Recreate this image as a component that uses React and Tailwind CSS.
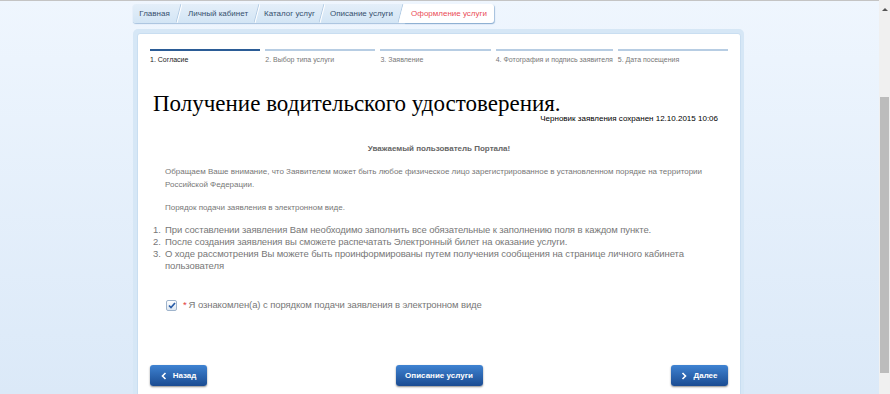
import React, { useState } from "react";

const tabs = [
  { label: "Главная", w: "w-[43px]" },
  { label: "Личный кабинет", w: "w-[72px]" },
  { label: "Каталог услуг", w: "w-[59px]" },
  { label: "Описание услуги", w: "w-[73px]" },
];

const steps = [
  "1. Согласие",
  "2. Выбор типа услуги",
  "3. Заявление",
  "4. Фотография и подпись заявителя",
  "5. Дата посещения",
];

const rules = [
  "При составлении заявления Вам необходимо заполнить все обязательные к заполнению поля в каждом пункте.",
  "После создания заявления вы сможете распечатать Электронный билет на оказание услуги.",
  "О ходе рассмотрения Вы можете быть проинформированы путем получения сообщения на странице личного кабинета пользователя",
];

const Chevron = ({ dir }) => (
  <svg width="6" height="8" viewBox="0 0 6 8" className="shrink-0">
    {dir === "left" ? (
      <polyline points="4.5,1 1.5,4 4.5,7" fill="none" stroke="white" strokeWidth="1.6" />
    ) : (
      <polyline points="1.5,1 4.5,4 1.5,7" fill="none" stroke="white" strokeWidth="1.6" />
    )}
  </svg>
);

// slanted divider between breadcrumb tabs
const Divider = ({ last }) => (
  <svg width="6" height="19" viewBox="0 0 6 19" className="shrink-0">
    {last && <polygon points="5,0 6,0 6,19 0.5,19" fill="white" />}
    <line x1="0" y1="19" x2="5" y2="0" stroke="#b4cce4" strokeWidth="1" />
    <line x1="1" y1="19" x2="6" y2="0" stroke="white" strokeWidth="1" />
  </svg>
);

const NavButton = ({ children, className = "" }) => (
  <button
    className={
      "h-[21px] flex items-center justify-center gap-[6px] rounded-[3px] bg-gradient-to-b from-[#3f83d2] to-[#1b4c92] text-white text-[8px] font-bold shadow-[0_1px_2px_rgba(0,0,0,0.45)] " +
      className
    }
  >
    {children}
  </button>
);

export default function App() {
  const [agreed, setAgreed] = useState(true);

  return (
    <div className="w-[890px] h-[394px] overflow-hidden flex font-['Liberation_Sans',Arial,sans-serif]">
      <div className="flex-1 flex flex-col bg-gradient-to-b from-[#eff6fe] to-[#dbe9f8]">
        {/* top strip */}
        <div className="h-[3px] bg-[#d9d9d9] border-b border-[#c4c4c4]" />

        <div className="w-[611px] ml-[133px] mt-[3px]">
          {/* Breadcrumb tabs */}
          <div className="flex h-[19px] w-[361px] rounded-[3px] bg-gradient-to-b from-[#e4eff9] to-[#d3e5f5] shadow-[0_1px_1px_rgba(120,160,200,0.6)] text-[8px] text-[#36506e]">
            {tabs.map((t, i) => (
              <React.Fragment key={t.label}>
                <div className={"flex items-center justify-center whitespace-nowrap " + t.w}>{t.label}</div>
                <Divider last={i === tabs.length - 1} />
              </React.Fragment>
            ))}
            <div className="flex-1 flex items-center justify-center whitespace-nowrap bg-white rounded-r-[3px] text-[#ea4b55] shadow-[1px_1px_1px_rgba(120,160,200,0.6)]">
              Оформление услуги
            </div>
          </div>

          {/* Main panel */}
          <div className="mt-[6px] rounded-[5px] bg-[#d6e7f6] p-[4px] pr-[3px] h-[380px]">
            <div className="h-full rounded-[3px] bg-white border border-[#c9def1] px-[12px] pt-[15px]">
              {/* Steps */}
              <div className="flex gap-[5px]">
                {steps.map((s, i) => (
                  <div key={s} className="flex-1">
                    <div className={i === 0 ? "h-[2px] bg-[#2b5c96]" : "h-[2px] bg-[#b7cde3]"} />
                    <div
                      className={
                        "mt-[4px] text-[7px] leading-[9px] whitespace-nowrap " +
                        (i === 0 ? "text-[#222]" : "text-[#777]")
                      }
                    >
                      {s}
                    </div>
                  </div>
                ))}
              </div>

              {/* Title */}
              <h1 className="mt-[28px] ml-[3px] font-['Liberation_Serif','Times_New_Roman',serif] text-[23px] leading-[24px] text-black">
                Получение водительского удостоверения.
              </h1>
              <div className="-mt-[2px] text-right pr-[10px] text-[8px] leading-[10px] text-black">
                Черновик заявления сохранен 12.10.2015 10:06
              </div>

              {/* Notice */}
              <div className="mt-[19px] text-center text-[8px] font-bold text-[#666]">
                Уважаемый пользователь Портала!
              </div>
              <p className="mt-[10px] ml-[15px] mr-[20px] text-[8px] leading-[13px] text-[#777]">
                Обращаем Ваше внимание, что Заявителем может быть любое физическое лицо зарегистрированное в
                установленном порядке на территории Российской Федерации.
              </p>
              <p className="mt-[10px] ml-[15px] text-[8px] leading-[13px] text-[#777]">
                Порядок подачи заявления в электронном виде.
              </p>

              <ol className="mt-[10px] ml-[3px] mr-[40px] text-[9.5px] tracking-[-0.1px] leading-[12px] text-[#777]">
                {rules.map((r, i) => (
                  <li key={i} className="flex">
                    <span className="w-[12px] shrink-0">{i + 1}.</span>
                    <span>{r}</span>
                  </li>
                ))}
              </ol>

              {/* Agreement */}
              <label className="mt-[26px] ml-[16px] flex items-center gap-[6px] text-[9.5px] tracking-[-0.1px] text-[#777]">
                <span
                  onClick={() => setAgreed(!agreed)}
                  className="w-[11px] h-[11px] rounded-[2px] border border-[#9fb4cc] bg-gradient-to-b from-white to-[#dde6f0] flex items-center justify-center"
                >
                  {agreed && (
                    <svg width="8" height="7" viewBox="0 0 8 7">
                      <polyline points="1,3.5 3,5.5 7,1" fill="none" stroke="#2a5da8" strokeWidth="1.7" />
                    </svg>
                  )}
                </span>
                <span>
                  <span className="text-[#e23a3a] mr-[2px]">*</span>Я ознакомлен(а) с порядком подачи заявления в
                  электронном виде
                </span>
              </label>

              {/* Buttons */}
              <div className="mt-[53px] flex justify-between items-center">
                <NavButton className="w-[57px]">
                  <Chevron dir="left" />
                  Назад
                </NavButton>
                <NavButton className="w-[87px]">Описание услуги</NavButton>
                <NavButton className="w-[57px]">
                  <Chevron dir="right" />
                  Далее
                </NavButton>
              </div>
            </div>
          </div>
        </div>
      </div>

      {/* Scrollbar */}
      <div className="w-[11px] bg-[#f0f0f0] flex flex-col items-center">
        <div className="mt-[8px] w-0 h-0 border-l-[3px] border-r-[3px] border-b-[3px] border-l-transparent border-r-transparent border-b-[#555]" />
        <div className="mt-[86px] w-[9px] h-[276px] bg-[#bcbcbc]" />
      </div>
    </div>
  );
}
